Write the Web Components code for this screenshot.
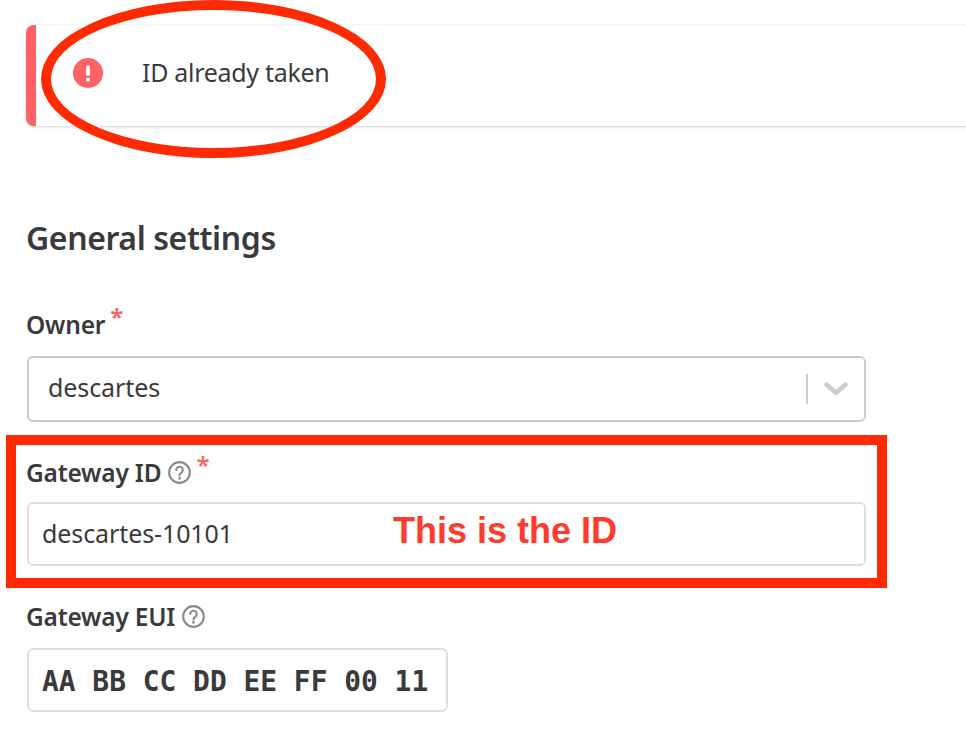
<!DOCTYPE html>
<html lang="en">
<head>
<meta charset="utf-8">
<title>General settings</title>
<style>
  html, body { margin: 0; height: 100%; background: #fff; overflow: hidden; }
  body { font-family: "Noto Sans", sans-serif; color: #3a3a3c; }
</style>
</head>
<body>
<gateway-form>
  <error-note slot="note">ID already taken</error-note>
  <span slot="title">General settings</span>
  <form-field label="Owner" required gap="16" style="margin-bottom: 34px">
    <select-box>descartes</select-box>
  </form-field>
  <form-field label="Gateway ID" help required gap="14" style="margin-bottom: 34px">
    <text-box>descartes-10101</text-box>
  </form-field>
  <form-field label="Gateway EUI" help gap="16">
    <text-box mono>AA BB CC DD EE FF 00 11</text-box>
  </form-field>
</gateway-form>
<mark-up></mark-up>

<script>
const helpIcon = `<svg width="23" height="23" viewBox="0 0 24 24" fill="none" stroke="#8a8a8a" stroke-width="2.2">
  <circle cx="12" cy="12" r="10.8"/>
  <path d="M8.6 9.4a3.4 3.4 0 1 1 5.2 2.9c-1.1.7-1.8 1.3-1.8 2.7" stroke-linecap="round"/>
  <circle cx="12" cy="18.2" r="1.4" fill="#8a8a8a" stroke="none"/>
</svg>`;

class GatewayForm extends HTMLElement {
  constructor() {
    super();
    this.attachShadow({ mode: 'open' });
    this.shadowRoot.innerHTML = `
      <style>
        :host { display: block; padding: 25px 0 0 26px; }
        h2 {
          margin: 0;
          padding: 90px 0 0 0;
          font-size: 32px;
          line-height: 44px;
          font-weight: 600;
          color: #3a3a3c;
          letter-spacing: -0.4px;
        }
        .fields { display: flex; flex-direction: column; padding: 48px 0 0 1px; width: 839px; }
      </style>
      <slot name="note"></slot>
      <h2><slot name="title"></slot></h2>
      <div class="fields"><slot></slot></div>
    `;
  }
}

class ErrorNote extends HTMLElement {
  constructor() {
    super();
    this.attachShadow({ mode: 'open' });
    this.shadowRoot.innerHTML = `
      <style>
        :host {
          display: flex;
          align-items: center;
          box-sizing: border-box;
          height: 101px;
          margin-right: -10px;
          padding-left: 37px;
          border-left: 10px solid #ff6166;
          border-radius: 8px 0 0 8px;
          background: #fff;
          box-shadow: 0 1px 3px rgba(0,0,0,.17), 0 0 2px rgba(0,0,0,.05);
        }
        svg { flex: none; margin: -6px 39px 0 0; }
        span { font-size: 25px; letter-spacing: -0.3px; color: #3a3a3c; margin-top: -8px; }
      </style>
      <svg width="30" height="30" viewBox="0 0 32 32">
        <circle cx="16" cy="16" r="16" fill="#ff6166"/>
        <rect x="14" y="8" width="4" height="11" rx="1" fill="#fff"/>
        <rect x="14" y="21" width="4" height="4" rx="1" fill="#fff"/>
      </svg>
      <span><slot></slot></span>
    `;
  }
}

class FormField extends HTMLElement {
  constructor() {
    super();
    this.attachShadow({ mode: 'open' });
    const help = this.hasAttribute('help') ? `<span class="help">${helpIcon}</span>` : '';
    const req = this.hasAttribute('required') ? '<span class="req">*</span>' : '';
    this.shadowRoot.innerHTML = `
      <style>
        :host { display: block; margin-bottom: 35px; }
        .label {
          display: flex;
          align-items: center;
          height: 32px;
          margin-left: -1px;
          font-size: 24.5px;
          font-weight: 600;
          letter-spacing: -0.2px;
          color: #3a3a3c;
          margin-bottom: ${this.getAttribute('gap') || 10}px;
        }
        .help { display: flex; margin-left: 7px; }
        .req { color: #ff6166; font-size: 24px; font-weight: 600; margin: -14px 0 0 5px; line-height: 1; }
      </style>
      <div class="label">${this.getAttribute('label')}${help}${req}</div>
      <slot></slot>
    `;
  }
}

class SelectBox extends HTMLElement {
  constructor() {
    super();
    this.attachShadow({ mode: 'open' });
    this.shadowRoot.innerHTML = `
      <style>
        :host {
          display: flex;
          align-items: center;
          box-sizing: border-box;
          height: 66px;
          padding: 0 16px 0 19px;
          border: 2px solid #cccccc;
          border-radius: 6px;
          font-size: 25px;
          letter-spacing: -0.1px;
          color: #3a3a3c;
        }
        .value { flex: 1; margin-top: -4px; }
        .sep { width: 2px; height: 30px; background: #cccccc; margin-right: 16px; }
      </style>
      <span class="value"><slot></slot></span>
      <span class="sep"></span>
      <svg width="24" height="16" viewBox="0 0 24 16" fill="none" stroke="#cccccc" stroke-width="4.4" stroke-linecap="round" stroke-linejoin="round">
        <path d="M2.5 3.5 12 12l9.5-8.5"/>
      </svg>
    `;
  }
}

class TextBox extends HTMLElement {
  constructor() {
    super();
    this.attachShadow({ mode: 'open' });
    this.shadowRoot.innerHTML = `
      <style>
        :host {
          display: flex;
          align-items: center;
          box-sizing: border-box;
          height: 64px;
          padding: 0 13px 2px;
          border: 2px solid #dedede;
          border-radius: 6px;
          font-size: 25px;
          letter-spacing: -0.1px;
          color: #3a3a3c;
        }
        :host([mono]) {
          width: 421px;
          padding: 2px 13px 0;
          font-family: "DejaVu Sans Mono", monospace;
          font-size: 27.9px;
          font-weight: 700;
          letter-spacing: 0;
        }
      </style>
      <slot></slot>
    `;
  }
}

// hand drawn annotations on top of the screenshot
class MarkUp extends HTMLElement {
  constructor() {
    super();
    this.attachShadow({ mode: 'open' });
    this.shadowRoot.innerHTML = `
      <style>
        :host { position: absolute; inset: 0; pointer-events: none; }
        .ring {
          position: absolute; left: 41px; top: 0; width: 345px; height: 158px;
          box-sizing: border-box; border: 10px solid #ff2a00; border-radius: 50%;
        }
        .box {
          position: absolute; left: 6px; top: 435px; width: 881px; height: 153px;
          box-sizing: border-box; border: 10px solid #ff2a00;
        }
        .txt {
          position: absolute; left: 393px; top: 509px;
          font: 700 36px/44px "Liberation Sans", sans-serif; color: #ff3b2f;
        }
      </style>
      <div class="ring"></div>
      <div class="box"></div>
      <div class="txt">This is the ID</div>
    `;
  }
}

customElements.define('gateway-form', GatewayForm);
customElements.define('error-note', ErrorNote);
customElements.define('form-field', FormField);
customElements.define('select-box', SelectBox);
customElements.define('text-box', TextBox);
customElements.define('mark-up', MarkUp);
</script>
</body>
</html>
